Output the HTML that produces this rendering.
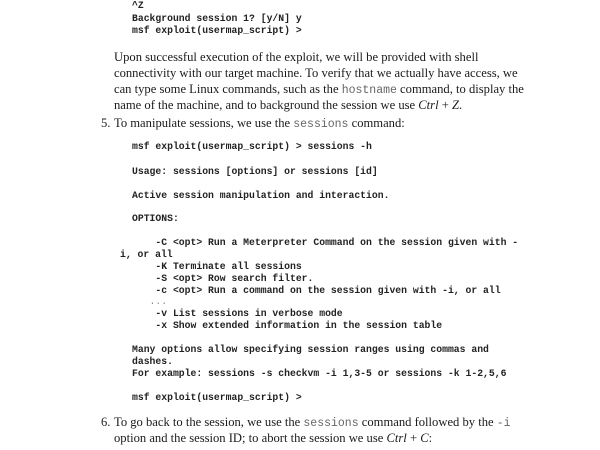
<!DOCTYPE html>
<html><head><style>
body{margin:0;width:600px;height:450px;background:#fff;position:relative;overflow:hidden;color:#222}
.c{position:absolute;left:132px;font:bold 9.75px/12px "Liberation Mono",monospace;white-space:pre;color:#222}
.t{position:absolute;left:114px;font:12.6px/16px "Liberation Serif",serif;white-space:pre;color:#1a1a1a}
.n{position:absolute;left:101px;font:12.6px/16px "Liberation Serif",serif}
.m{font:11.5px "Liberation Mono",monospace;color:#666}
</style></head><body>
<div class="c" style="top:0">^Z</div>
<div class="c" style="top:13px">Background session 1? [y/N] y</div>
<div class="c" style="top:25px">msf exploit(usermap_script) &gt;</div>
<div class="t" style="top:49px">Upon successful execution of the exploit, we will be provided with shell</div>
<div class="t" style="top:65px">connectivity with our target machine. To verify that we actually have access, we</div>
<div class="t" style="top:81px">can type some Linux commands, such as the <span class="m">hostname</span> command, to display the</div>
<div class="t" style="top:97px">name of the machine, and to background the session we use <i>Ctrl</i> + <i>Z</i>.</div>
<div class="n" style="top:115px">5.</div>
<div class="t" style="top:115px">To manipulate sessions, we use the <span class="m">sessions</span> command:</div>
<div class="c" style="top:141px">msf exploit(usermap_script) &gt; sessions -h</div>
<div class="c" style="top:166px">Usage: sessions [options] or sessions [id]</div>
<div class="c" style="top:190px">Active session manipulation and interaction.</div>
<div class="c" style="top:213px">OPTIONS:</div>
<div class="c" style="top:237px">    -C &lt;opt&gt; Run a Meterpreter Command on the session given with -</div>
<div class="c" style="top:249px;left:120px">i, or all</div>
<div class="c" style="top:261px">    -K Terminate all sessions</div>
<div class="c" style="top:273px">    -S &lt;opt&gt; Row search filter.</div>
<div class="c" style="top:285px">    -c &lt;opt&gt; Run a command on the session given with -i, or all</div>
<div class="c" style="top:296px;font-weight:normal;color:#888">   ...</div>
<div class="c" style="top:308px">    -v List sessions in verbose mode</div>
<div class="c" style="top:320px">    -x Show extended information in the session table</div>
<div class="c" style="top:344px">Many options allow specifying session ranges using commas and</div>
<div class="c" style="top:356px">dashes.</div>
<div class="c" style="top:368px">For example: sessions -s checkvm -i 1,3-5 or sessions -k 1-2,5,6</div>
<div class="c" style="top:392px">msf exploit(usermap_script) &gt;</div>
<div class="n" style="top:414px">6.</div>
<div class="t" style="top:414px">To go back to the session, we use the <span class="m">sessions</span> command followed by the <span class="m">-i</span></div>
<div class="t" style="top:430px">option and the session ID; to abort the session we use <i>Ctrl</i> + <i>C</i>:</div>
</body></html>
